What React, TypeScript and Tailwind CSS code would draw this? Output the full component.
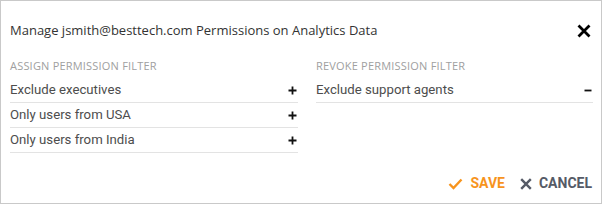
import React from "react";

function Row({ label, sign }: { label: string; sign: "+" | "-" }) {
  return (
    <div className="flex h-[25px] items-center justify-between border-b border-[#e3e3e3] pr-[1px]">
      <span className="text-[13.2px] text-[#4d4d4d]" style={{ fontFamily: "Roboto, sans-serif" }}>{label}</span>
      {sign === "+" ? (
        <svg width="9" height="9" viewBox="0 0 9 9">
          <path d="M4.5 0.5v8M0.5 4.5h8" stroke="#111" strokeWidth="1.8" />
        </svg>
      ) : (
        <svg width="8" height="9" viewBox="0 0 8 9">
          <path d="M0.5 4.5h7" stroke="#111" strokeWidth="1.8" />
        </svg>
      )}
    </div>
  );
}

export default function App() {
  return (
    <div className="w-[602px] h-[204px] border border-[#c9c9c9] bg-white flex flex-col" style={{ fontFamily: "'Open Sans', sans-serif" }}>
      <div className="flex items-center justify-between pl-[9px] pr-[10px] pt-[18px] h-[42px]">
        <span className="text-[13px] text-[#333]">Manage jsmith@besttech.com Permissions on Analytics Data</span>
        <svg width="14" height="14" viewBox="0 0 14 14">
          <path d="M1.5 1.5l11 11M12.5 1.5l-11 11" stroke="#000" strokeWidth="2.8" />
        </svg>
      </div>
      <div className="flex gap-[18px] pl-[9px] pr-[8px] mt-[16px]">
        <div className="w-[288px]">
          <div className="text-[11px] tracking-[0.2px] text-[#a0a0a0] leading-[14px] mb-[5px]">ASSIGN PERMISSION FILTER</div>
          <Row label="Exclude executives" sign="+" />
          <Row label="Only users from USA" sign="+" />
          <Row label="Only users from India" sign="+" />
        </div>
        <div className="flex-1">
          <div className="text-[11px] tracking-[0.2px] text-[#a0a0a0] leading-[14px] mb-[5px]">REVOKE PERMISSION FILTER</div>
          <Row label="Exclude support agents" sign="-" />
        </div>
      </div>
      <div className="mt-auto flex items-center justify-end gap-[7px] pr-[9px] pb-[9px]">
        <div className="flex items-center gap-[7px]">
          <svg width="15" height="12" viewBox="0 0 15 12">
            <path d="M1.5 6l4 4 8-8.5" stroke="#f7941d" strokeWidth="2.4" fill="none" />
          </svg>
          <span className="text-[14px] font-bold text-[#f7941d]" style={{ fontFamily: "Roboto, sans-serif" }}>SAVE</span>
        </div>
        <div className="flex items-center gap-[7px] ml-[8px]">
          <svg width="12" height="12" viewBox="0 0 12 12">
            <path d="M1.2 1.2l9.6 9.6M10.8 1.2l-9.6 9.6" stroke="#555a66" strokeWidth="2.4" />
          </svg>
          <span className="text-[14px] font-bold text-[#555a66]" style={{ fontFamily: "Roboto, sans-serif" }}>CANCEL</span>
        </div>
      </div>
    </div>
  );
}
